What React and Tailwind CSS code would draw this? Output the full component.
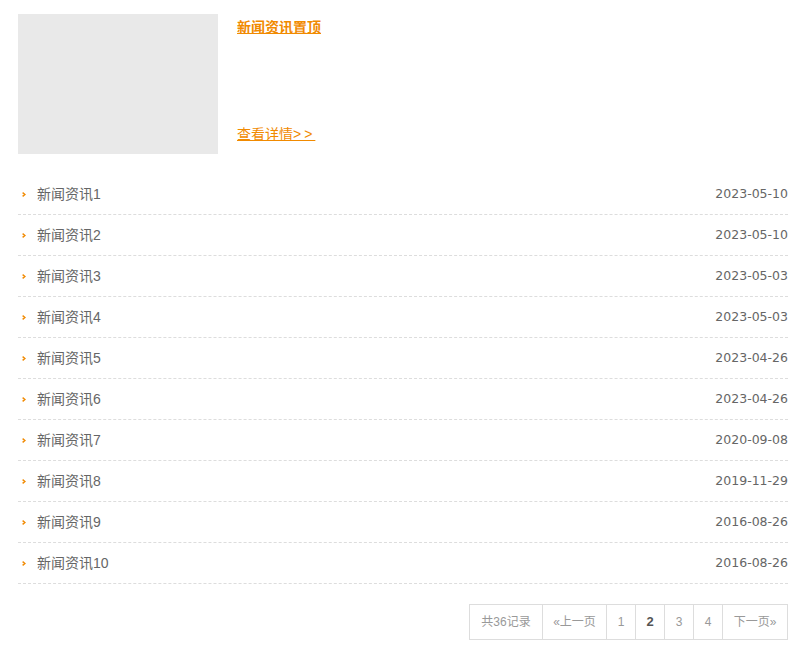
const rows = [
  ['新闻资讯1', '2023-05-10'],
  ['新闻资讯2', '2023-05-10'],
  ['新闻资讯3', '2023-05-03'],
  ['新闻资讯4', '2023-05-03'],
  ['新闻资讯5', '2023-04-26'],
  ['新闻资讯6', '2023-04-26'],
  ['新闻资讯7', '2020-09-08'],
  ['新闻资讯8', '2019-11-29'],
  ['新闻资讯9', '2016-08-26'],
  ['新闻资讯10', '2016-08-26'],
]

function Bullet() {
  return (
    <svg width="4" height="5" viewBox="0 0 4 5" className="shrink-0">
      <path d="M0.6 0.6 L3 2.5 L0.6 4.4" fill="none" stroke="#f18a00" strokeWidth="1.4" />
    </svg>
  )
}

export default function App() {
  return (
    <div
      className="w-[807px] min-h-[658px] bg-white pl-[18px] pr-[19px] pt-[14px]"
      style={{ fontFamily: '"Liberation Sans", "Noto Sans CJK SC", sans-serif' }}
    >
      {/* 置顶新闻 */}
      <div className="flex">
        <div className="w-[200px] h-[140px] bg-[#e9e9e9] shrink-0" />
        <div className="ml-[19px] flex flex-col justify-between pt-[3px] pb-[10px]">
          <a className="text-[14px] font-bold text-[#f18a00] underline leading-[20px]">新闻资讯置顶</a>
          <a className="text-[14px] text-[#f18a00] underline leading-[20px]">
            查看详情<span className="tracking-[3px]">&gt;&gt;</span>
          </a>
        </div>
      </div>

      {/* 列表 */}
      <ul className="mt-[20px]">
        {rows.map(([title, date]) => (
          <li
            key={title}
            className="flex items-center justify-between h-[41px] border-b border-dashed border-[#dddddd]"
          >
            <div className="flex items-center">
              <span className="ml-[4px] mr-[15px] flex items-center"><Bullet /></span>
              <span className="text-[14px] text-[#666666] -ml-[4px]">{title}</span>
            </div>
            <span
              className="text-[12.5px] text-[#666666]"
              style={{ fontFamily: '"DejaVu Sans", sans-serif' }}
            >
              {date}
            </span>
          </li>
        ))}
      </ul>

      {/* 分页 */}
      <div className="flex justify-end mt-[20px]">
        <div className="flex h-[36px] border border-[#dddddd] text-[12px] text-[#999999]">
          <span className="w-[73px] flex items-center justify-center border-r border-[#dddddd]">共36记录</span>
          <span className="w-[64px] flex items-center justify-center border-r border-[#dddddd]">«上一页</span>
          <span className="w-[29px] flex items-center justify-center border-r border-[#dddddd]">1</span>
          <span className="w-[29px] flex items-center justify-center border-r border-[#dddddd] font-bold text-[#555555] text-[13px]">2</span>
          <span className="w-[29px] flex items-center justify-center border-r border-[#dddddd]">3</span>
          <span className="w-[29px] flex items-center justify-center border-r border-[#dddddd]">4</span>
          <span className="w-[64px] flex items-center justify-center">下一页»</span>
        </div>
      </div>
    </div>
  )
}
